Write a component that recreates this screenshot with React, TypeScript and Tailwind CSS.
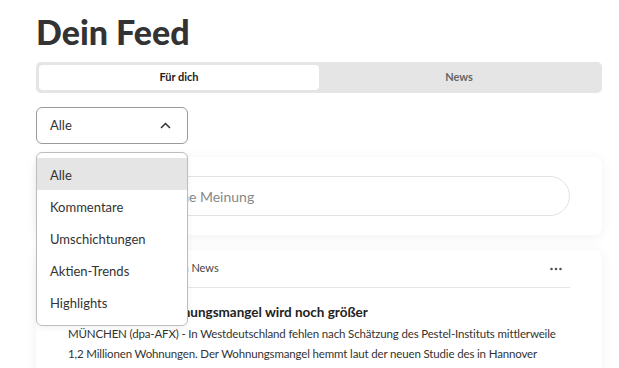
import React from 'react';

const options = ['Alle', 'Kommentare', 'Umschichtungen', 'Aktien-Trends', 'Highlights'];

const FeedTabs = () => (
  <div className="mt-[10px] flex h-[31px] rounded-[5px] bg-[#e5e5e5] p-[3px]">
    <button className="flex-1 rounded-[4px] bg-white text-[11px] font-bold text-[#222]">Für dich</button>
    <button className="flex-1 text-[11px] font-bold text-[#666]">News</button>
  </div>
);

const FilterSelect = () => (
  <div className="relative mt-[14px] w-[152px]">
    <button className="flex h-[37px] w-full items-center justify-between rounded-[6px] border border-[#9a9a9a] bg-white pl-[13px] pr-[16px] text-[13px] text-[#333]">
      <span className="pt-[1px]">Alle</span>
      <svg width="11" height="7" viewBox="0 0 11 7" fill="none" stroke="#333" strokeWidth="1.5">
        <path d="M1 6l4.5-4.5L10 6" />
      </svg>
    </button>
    <ul className="absolute left-0 top-[45px] z-10 w-full rounded-[6px] border border-[#bdbdbd] bg-white pt-[5px] pb-[7px] shadow-[0_2px_6px_rgba(0,0,0,0.06)]">
      {options.map((o, i) => (
        <li
          key={o}
          className={`flex h-[32px] items-center pl-[13px] pt-[4px] text-[13px] text-[#333] ${i === 0 ? 'bg-[#e5e5e5]' : ''}`}
        >
          {o}
        </li>
      ))}
    </ul>
  </div>
);

export default function App() {
  return (
    <div className="h-screen overflow-hidden bg-white pl-[36px] pr-[17px] pt-[12px] font-['Lato',sans-serif] text-[#333]">
      <h1 className="text-[34px] font-black leading-[40px] text-[#333]">Dein Feed</h1>
      <FeedTabs />
      <FilterSelect />

      <div className="mt-[13px] rounded-[8px] bg-white px-[32px] py-[19px] shadow-[0_2px_14px_rgba(0,0,0,0.06)]">
        <div className="flex h-[40px] items-center rounded-full border border-[#e2e2e2] pl-[35px] pr-[16px] text-[14px] text-[#888]">
          Teile hier deine Meinung
        </div>
      </div>

      <div className="mt-[15px] rounded-[8px] bg-white px-[32px] shadow-[0_2px_14px_rgba(0,0,0,0.06)]">
        <div className="flex h-[38px] items-center justify-between border-b border-[#e5e5e5]">
          <div className="flex items-center gap-[4px] text-[11px] text-[#444]">
            <span className="h-[22px] w-[22px] rounded-full bg-[#1f4e8c]" />
            <span>dpa-AFX · Finanzen News</span>
          </div>
          <svg width="12" height="4" viewBox="0 0 12 4" className="mr-[8px]" fill="#555">
            <circle cx="1.5" cy="2" r="1.3" />
            <circle cx="6" cy="2" r="1.3" />
            <circle cx="10.5" cy="2" r="1.3" />
          </svg>
        </div>
        <h2 className="mt-[14px] text-[13.5px] font-bold leading-[20px] text-[#222]">
          ROUNDUP 2: Wohnungsmangel wird noch größer
        </h2>
        <p className="mt-[2px] text-[11.5px] leading-[20px] tracking-[-0.15px] text-[#333]">
          MÜNCHEN (dpa-AFX) - In Westdeutschland fehlen nach Schätzung des Pestel-Instituts mittlerweile
          <br />
          1,2 Millionen Wohnungen. Der Wohnungsmangel hemmt laut der neuen Studie des in Hannover
          <br />
          ansässigen Forschungs- und Beratungsinstituts mittlerweile die wirtschaftliche Entwicklung in
        </p>
      </div>
    </div>
  );
}
